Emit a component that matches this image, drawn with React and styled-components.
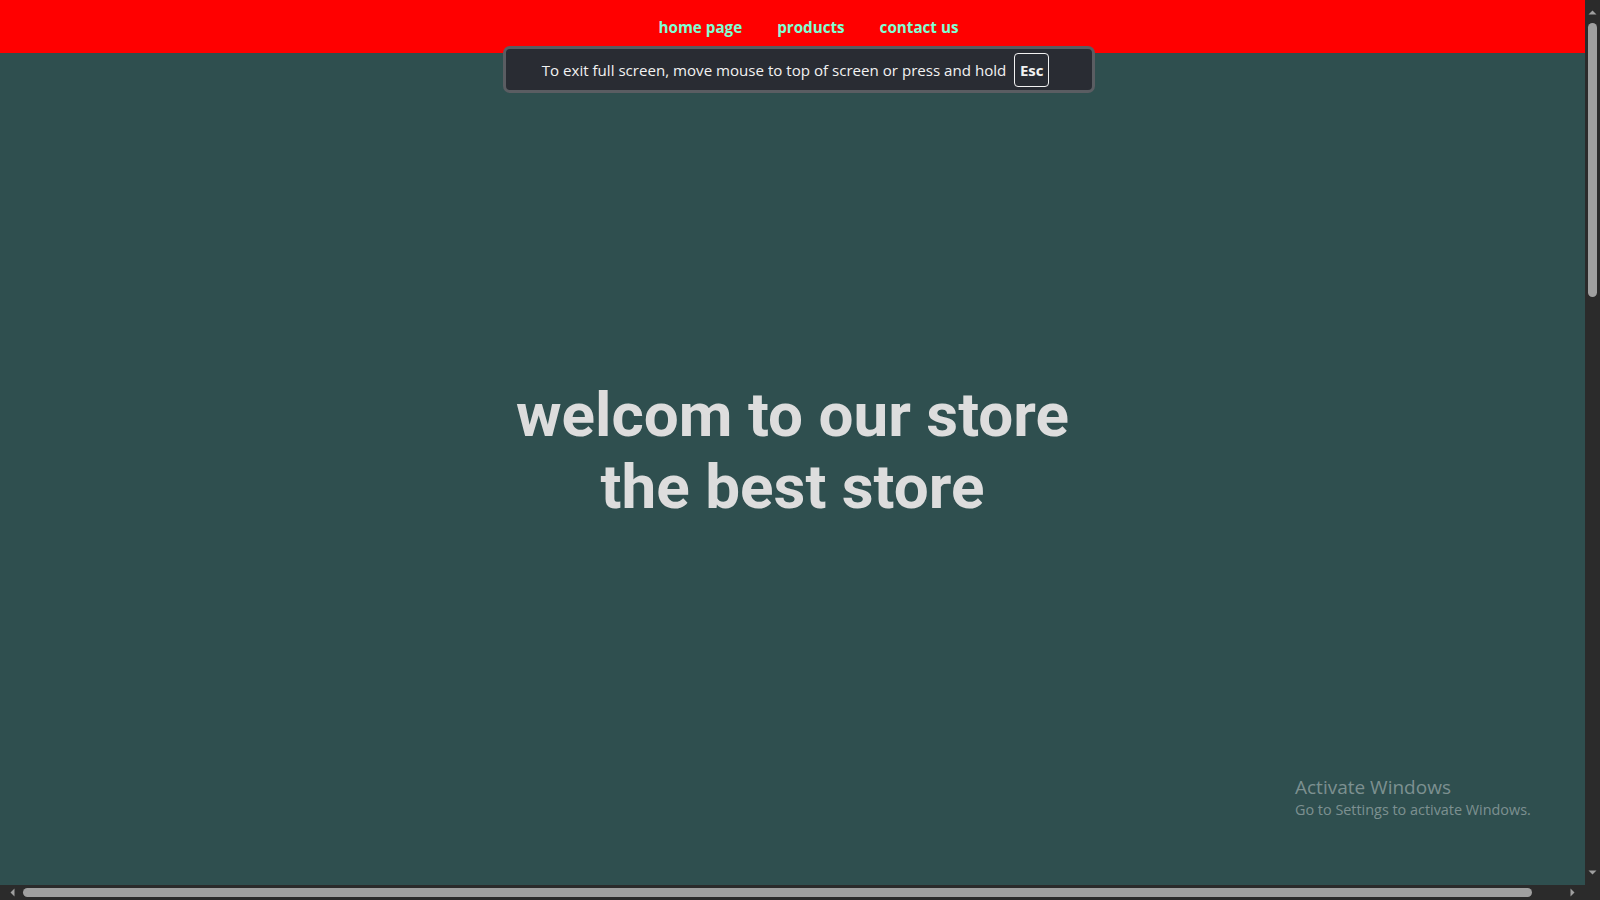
import React from 'react';
import styled, {createGlobalStyle} from 'styled-components';

const red = '#ff0000';
const slate = '#2f4f4f';
const aqua = '#7fffd4';
const barDark = '#2b2b2b';
const thumbGray = '#a0a0a0';

const GlobalStyle = createGlobalStyle`
  html, body {
    margin: 0;
    padding: 0;
    width: 100%;
    height: 100%;
    overflow: hidden;
    background-color: ${slate};
  }
  #root {
    width: 100%;
    height: 100%;
  }
`;

//styled components
const Screen = styled.div`
  position: relative;
  width: 1600px;
  height: 900px;
  display: grid;
  grid-template-columns: 1fr 15px;
  grid-template-rows: 1fr 15px;
`;

const Page = styled.div`
  display: flex;
  flex-direction: column;
  background-color: ${slate};
  overflow: hidden;
`;

const Header = styled.header`
  height: 53px;
  background-color: ${red};
  display: flex;
  justify-content: center;
  align-items: center;
  padding-left: 32px;
  gap: 35px;
`;

const NavLink = styled.a`
  font-family: 'Open Sans', 'Noto Sans', sans-serif;
  font-weight: 700;
  font-size: 15.2px;
  color: ${aqua};
  text-decoration: none;
`;

const Hero = styled.main`
  flex: 1;
  display: flex;
  flex-direction: column;
  align-items: center;
  justify-content: center;
  padding-bottom: 36px;
`;

const Title = styled.h1`
  margin: 0;
  font-family: Roboto, 'Liberation Sans', Arial, sans-serif;
  font-weight: 700;
  font-size: 62px;
  line-height: 72px;
  color: #dddddd;
  text-align: center;
`;

const Toast = styled.div`
  position: absolute;
  top: 46px;
  left: 503px;
  width: 592px;
  height: 47px;
  box-sizing: border-box;
  border: 3px solid #5a5d62;
  border-radius: 7px;
  background-color: #292c33;
  display: flex;
  align-items: center;
  justify-content: center;
  gap: 8px;
  padding-right: 7px;
  font-family: 'Open Sans', 'Noto Sans', sans-serif;
  font-size: 15.1px;
  color: #f2f2f2;
`;

const KeyCap = styled.span`
  display: inline-flex;
  align-items: center;
  justify-content: center;
  width: 35px;
  height: 34px;
  box-sizing: border-box;
  border: 1px solid #f2f2f2;
  border-radius: 4px;
  font-weight: 700;
  font-size: 15px;
`;

const Watermark = styled.div`
  position: absolute;
  left: 1295px;
  top: 775px;
  font-family: 'Open Sans', 'Noto Sans', sans-serif;
  color: rgba(255, 255, 255, 0.38);
`;

const WatermarkTitle = styled.div`
  font-size: 19px;
  line-height: 24px;
`;

const WatermarkText = styled.div`
  font-size: 14.4px;
  line-height: 22px;
`;

const VScroll = styled.div`
  background-color: ${barDark};
  display: flex;
  flex-direction: column;
  align-items: center;
  padding: 5px 0;
`;

const HScroll = styled.div`
  background-color: ${barDark};
  display: flex;
  align-items: center;
  padding: 0 5px;
`;

const Corner = styled.div`
  background-color: ${barDark};
`;

const ArrowBox = styled.div`
  width: 15px;
  height: 15px;
  flex: none;
  display: flex;
  align-items: center;
  justify-content: center;
`;

const VThumb = styled.div`
  width: 9px;
  height: 274px;
  margin-top: 3px;
  border-radius: 5px;
  background-color: ${thumbGray};
`;

const HThumb = styled.div`
  height: 9px;
  width: 1509px;
  margin-left: 3px;
  border-radius: 5px;
  background-color: ${thumbGray};
`;

const Spacer = styled.div`
  flex: 1;
`;

function Arrow({dir}) {
  const points = {
    up: '3.5,9.5 7.5,5.5 11.5,9.5',
    down: '3.5,5.5 7.5,9.5 11.5,5.5',
    left: '9.5,3.5 5.5,7.5 9.5,11.5',
    right: '5.5,3.5 9.5,7.5 5.5,11.5',
  }[dir];
  return (
    <ArrowBox>
      <svg width="15" height="15" viewBox="0 0 15 15">
        <polygon points={points} fill={thumbGray} />
      </svg>
    </ArrowBox>
  );
}

export default function App() {
  return (
    <>
      <GlobalStyle />
      <Screen>
        <Page>
          <Header>
            <NavLink href="#">home page</NavLink>
            <NavLink href="#">products</NavLink>
            <NavLink href="#">contact us</NavLink>
          </Header>
          <Hero>
            <Title>
              welcom to our store
              <br />
              the best store
            </Title>
          </Hero>
        </Page>
        <VScroll>
          <Arrow dir="up" />
          <VThumb />
          <Spacer />
          <Arrow dir="down" />
        </VScroll>
        <HScroll>
          <Arrow dir="left" />
          <HThumb />
          <Spacer />
          <Arrow dir="right" />
        </HScroll>
        <Corner />
        <Toast>
          <span>To exit full screen, move mouse to top of screen or press and hold</span>
          <KeyCap>Esc</KeyCap>
        </Toast>
        <Watermark>
          <WatermarkTitle>Activate Windows</WatermarkTitle>
          <WatermarkText>Go to Settings to activate Windows.</WatermarkText>
        </Watermark>
      </Screen>
    </>
  );
}
